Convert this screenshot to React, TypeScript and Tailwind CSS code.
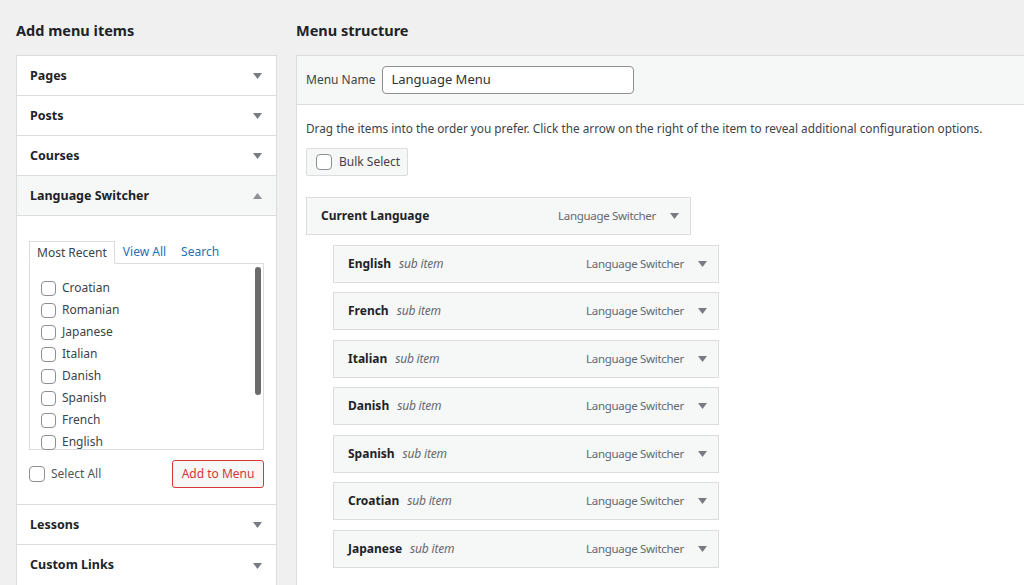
const ACCORDION_TOP = ['Pages', 'Posts', 'Courses']
const ACCORDION_BOTTOM = ['Lessons', 'Custom Links']

const LANGUAGES = [
  'Croatian',
  'Romanian',
  'Japanese',
  'Italian',
  'Danish',
  'Spanish',
  'French',
  'English',
]

const SUB_ITEMS = ['English', 'French', 'Italian', 'Danish', 'Spanish', 'Croatian', 'Japanese']

function Arrow({ up = false }: { up?: boolean }) {
  return (
    <svg width="9" height="6" viewBox="0 0 9 6" className="shrink-0" aria-hidden>
      {up ? (
        <path d="M0 6 L4.5 0 L9 6 Z" fill="#8c8f94" />
      ) : (
        <path d="M0 0 L9 0 L4.5 6 Z" fill="#787c82" />
      )}
    </svg>
  )
}

function Checkbox({ size = 'md' }: { size?: 'sm' | 'md' }) {
  return (
    <span
      className={
        size === 'sm'
          ? 'inline-block h-[15px] w-[15px] shrink-0 rounded-[4px] border border-[#8c8f94] bg-white'
          : 'inline-block h-[16px] w-[16px] shrink-0 rounded-[4px] border border-[#8c8f94] bg-white'
      }
    />
  )
}

function AccordionRow({ label }: { label: string }) {
  return (
    <div className="flex h-[40px] items-center justify-between border-b border-[#dcdcde] pl-[13px] pr-[14px] pt-px last:border-b-0">
      <span className="text-[12.5px] font-bold text-[#1d2327]">{label}</span>
      <Arrow />
    </div>
  )
}

function MenuItem({ title, sub, indent }: { title: string; sub?: boolean; indent?: boolean }) {
  return (
    <div
      className={
        indent
          ? 'ml-[27px] flex h-[38px] w-[386px] items-center border border-[#dcdcde] bg-[#f6f7f7] pl-[14px] pr-[11px]'
          : 'flex h-[38px] w-[385px] items-center border border-[#dcdcde] bg-[#f6f7f7] pl-[14px] pr-[11px]'
      }
    >
      <span className="text-[12px] font-bold text-[#1d2327]">{title}</span>
      {sub ? <span className="ml-[8px] text-[12px] italic tracking-[-0.2px] text-[#646970]">sub item</span> : null}
      <span className="ml-auto mr-[14px] text-[11.5px] tracking-[-0.3px] text-[#646970]">Language Switcher</span>
      <Arrow />
    </div>
  )
}

export default function App() {
  return (
    <div
      className="flex h-[585px] w-[1024px] overflow-hidden bg-[#f0f0f1] pl-[16px] text-[#1d2327]"
      style={{ fontFamily: '"Noto Sans", "Open Sans", sans-serif' }}
    >
      {/* left column */}
      <div className="w-[261px] shrink-0">
        <h2 className="flex h-[55px] items-center pt-[6px] text-[14.5px] font-bold">Add menu items</h2>
        <div className="border border-[#dcdcde] bg-white">
          {ACCORDION_TOP.map((label) => (
            <AccordionRow key={label} label={label} />
          ))}
          <div className="flex h-[40px] items-center justify-between border-b border-[#dcdcde] bg-[#f6f7f7] pl-[13px] pr-[14px] pt-px">
            <span className="text-[12.5px] font-bold text-[#1d2327]">Language Switcher</span>
            <Arrow up />
          </div>
          <div className="border-b border-[#dcdcde] px-[12px] pb-[16px] pt-[24px]">
            <div className="flex h-[23px] items-end text-[12px]">
              <span className="relative z-10 -mb-px flex h-[23px] items-center border border-b-white border-[#dcdcde] bg-white px-[7px] text-[#3c434a]">
                Most Recent
              </span>
              <span className="ml-[8px] flex h-[22px] items-center text-[#2271b1]">View All</span>
              <span className="ml-[15px] flex h-[22px] items-center text-[#2271b1]">Search</span>
            </div>
            <div className="relative h-[187px] border border-[#dcdcde] bg-white">
              <div className="flex flex-col gap-[6px] pl-[11px] pt-[16px]">
                {LANGUAGES.map((lang) => (
                  <label key={lang} className="flex h-[16px] items-center gap-[6px] text-[12px] text-[#3c434a]">
                    <Checkbox size="sm" />
                    {lang}
                  </label>
                ))}
              </div>
              <div className="absolute right-[2px] top-[3px] h-[128px] w-[6px] rounded-full bg-[#6b6b6b]" />
            </div>
            <div className="mt-[10px] flex items-center justify-between">
              <label className="flex items-center gap-[6px] text-[12px] text-[#50575e]">
                <Checkbox />
                Select All
              </label>
              <button
                type="button"
                className="flex h-[28px] w-[92px] items-center justify-center rounded-[3px] border border-[#d63638] bg-[#f6f7f7] text-[12px] text-[#d63638]"
              >
                Add to Menu
              </button>
            </div>
          </div>
          {ACCORDION_BOTTOM.map((label) => (
            <AccordionRow key={label} label={label} />
          ))}
        </div>
      </div>

      {/* right column */}
      <div className="ml-[19px] flex-1">
        <h2 className="flex h-[55px] items-center pt-[6px] text-[14.5px] font-bold">Menu structure</h2>
        <div className="-mr-[2px] h-[560px] border border-[#dcdcde] bg-white">
          <div className="flex h-[49px] items-center border-b border-[#dcdcde] bg-[#f6f7f7] pl-[9px]">
            <span className="text-[12px] text-[#3c434a]">Menu Name</span>
            <div className="ml-[7px] flex h-[28px] w-[252px] items-center rounded-[4px] border border-[#8c8f94] bg-white px-[8px] text-[13px] text-[#2c3338]">
              Language Menu
            </div>
          </div>
          <div className="pl-[9px]">
            <p className="pt-[14px] text-[11.8px] leading-[18px] text-[#3c434a]">
              Drag the items into the order you prefer. Click the arrow on the right of the item to reveal additional
              configuration options.
            </p>
            <div className="mt-[11px] flex h-[28px] w-[102px] items-center gap-[7px] rounded-[2px] border border-[#dcdcde] bg-[#f6f7f7] pl-[9px] text-[12px] text-[#3c434a]">
              <Checkbox />
              Bulk Select
            </div>
            <div className="mt-[21px] flex flex-col gap-[9.5px]">
              <MenuItem title="Current Language" />
              {SUB_ITEMS.map((name) => (
                <MenuItem key={name} title={name} sub indent />
              ))}
            </div>
          </div>
        </div>
      </div>
    </div>
  )
}
